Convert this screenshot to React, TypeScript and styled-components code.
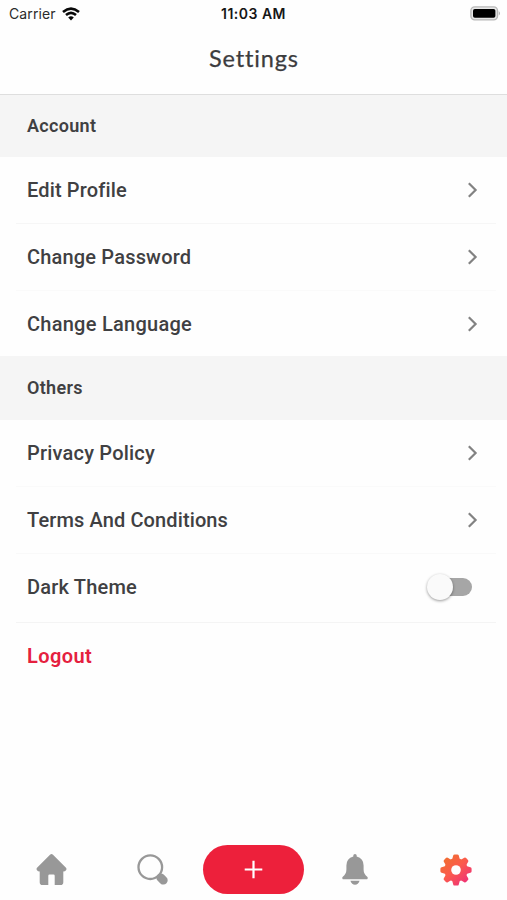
import React from "react";
import styled, { createGlobalStyle } from "styled-components";

const GlobalStyle = createGlobalStyle`
  * { box-sizing: border-box; }
  body { margin: 0; background: #fefefe; }
`;

const Screen = styled.div`
  display: flex;
  flex-direction: column;
  width: 507px;
  height: 900px;
  overflow: hidden;
  background: #fefefe;
  color: #404042;
  font-family: Roboto, sans-serif;
`;

const StatusBar = styled.div`
  display: grid;
  grid-template-columns: 1fr auto 1fr;
  align-items: center;
  height: 27px;
  font-family: Inter, sans-serif;
  line-height: 20px;
`;

const Carrier = styled.div`
  display: flex;
  align-items: center;
  gap: 6px;
  padding-left: 9px;
  color: #2b2b2b;
  font-size: 14px;
  letter-spacing: 0.1px;
`;

const Clock = styled.div`
  color: #161616;
  font-size: 14px;
  font-weight: 600;
  letter-spacing: 0.48px;
`;

const Battery = styled.div`
  display: flex;
  justify-content: flex-end;
  padding-right: 6px;
`;

const Header = styled.header`
  display: flex;
  justify-content: center;
  height: 68px;
  padding-top: 15px;
  border-bottom: 1px solid #dedede;
`;

const Title = styled.h1`
  margin: 0;
  padding-left: 1px;
  font-family: Lato, sans-serif;
  font-size: 23.5px;
  font-weight: 400;
  line-height: 32px;
  letter-spacing: 0.85px;
  color: #3c3c3e;
  -webkit-text-stroke: 0.25px #3c3c3e;
`;

const SectionTitle = styled.h2<{ $height: number }>`
  display: flex;
  align-items: center;
  height: ${(p) => p.$height}px;
  margin: 0;
  padding: 0 27px 2px;
  background: #f5f5f5;
  font-size: 18px;
  font-weight: 600;
  letter-spacing: 0.3px;
`;

const Row = styled.div<{ $height: number; $line?: string; $lift?: number }>`
  display: flex;
  align-items: center;
  justify-content: space-between;
  height: ${(p) => p.$height}px;
  margin: 0 11px 0 16px;
  padding: 0 18px ${(p) => p.$lift ?? 0}px 11px;
  border-bottom: ${(p) => (p.$line ? `1px solid ${p.$line}` : "0")};
`;

const Label = styled.span<{ $track: number; $danger?: boolean }>`
  font-size: 20px;
  font-weight: ${(p) => (p.$danger ? 600 : 500)};
  line-height: 28px;
  letter-spacing: ${(p) => p.$track}px;
  color: ${(p) => (p.$danger ? "#e5203e" : "inherit")};
  white-space: nowrap;
`;

const Switch = styled.button`
  display: flex;
  align-items: center;
  width: 41px;
  height: 18px;
  margin-right: 6px;
  padding: 0;
  border: 0;
  border-radius: 9px;
  background: #a6a6a6;
`;

const Knob = styled.span`
  flex: none;
  width: 26px;
  height: 26px;
  margin-left: -4px;
  border-radius: 50%;
  background: #fafafa;
  box-shadow: 0 1px 3px rgba(0, 0, 0, 0.4);
`;

const TabBar = styled.nav`
  display: grid;
  grid-template-columns: repeat(5, 1fr);
  align-items: center;
  justify-items: center;
  height: 61px;
  margin-top: auto;
`;

const Tab = styled.button<{ $nudge?: number }>`
  display: flex;
  padding: 0 0 0 ${(p) => p.$nudge ?? 0}px;
  border: 0;
  background: none;
`;

const AddButton = styled(Tab)`
  align-items: center;
  justify-content: center;
  width: 101px;
  height: 49px;
  border-radius: 25px;
  background: #ed203b;
`;

const Chevron = () => (
  <svg width="10" height="16" viewBox="0 0 10 16" fill="none" stroke="#828282" strokeWidth="2.2">
    <path d="M.8 1.2 7.6 8 .8 14.8" />
  </svg>
);

const WifiIcon = () => (
  <svg width="18" height="14" viewBox="0 0 18 14" fill="none" stroke="#080808" strokeWidth="2.6">
    <path d="M1 4.9Q9-1.8 17 4.9" />
    <path d="M4 8.1Q9 3.8 14 8.1" />
    <path d="M6.2 10.4Q9 8 11.8 10.4L9 13.6Z" fill="#080808" stroke="none" />
  </svg>
);

const BatteryIcon = () => (
  <svg width="31" height="15" viewBox="0 0 31 15">
    <rect x="0.9" y="0.9" width="26.6" height="13" rx="3.8" fill="#e8e8e8" stroke="#b8b8b8" strokeWidth="1.4" />
    <rect x="3" y="3" width="22.4" height="8.8" rx="1.8" fill="#000" />
    <path d="M28.8 5q2.2 2.3 0 4.6Z" fill="#aaa" />
  </svg>
);

const HomeIcon = () => (
  <svg width="31" height="31" viewBox="0 0 31 31" fill="#989898">
    <path d="M14 .8Q15.5-.6 17 .8L30 13.7Q31 15 30 16.2 29.2 17.5 27.3 17.5V28.2Q27.3 31 24.5 31H18.7V21.8Q18.7 20.5 17.5 20.5H13.5Q12.3 20.5 12.3 21.8V31H6.5Q3.7 31 3.7 28.2V17.5Q1.8 17.5 1 16.2 0 15 1 13.7Z" />
  </svg>
);

const SearchIcon = () => (
  <svg width="31" height="31" viewBox="0 0 31 31" fill="none" stroke="#989898">
    <circle cx="13.3" cy="13.2" r="11.8" strokeWidth="2.3" />
    <path d="m20.8 20.8 3 3" strokeWidth="4.5" />
    <path d="m23.7 23.7 2.7 2.6" strokeWidth="8.6" strokeLinecap="round" />
  </svg>
);

const PlusIcon = () => (
  <svg width="19" height="19" viewBox="0 0 19 19" stroke="#fff" strokeWidth="2.2">
    <path d="M0.7 9.5H18.3M9.5.7V18.3" />
  </svg>
);

const BellIcon = () => (
  <svg width="26" height="31" viewBox="0 0 26 31" fill="#989898">
    <path d="M11.3 2.4V1.6Q11.3 0 13 0T14.7 1.6V2.4Q21.6 4.1 21.6 11.5V15.5Q21.6 20.1 25.2 22.8 26.3 24 25.2 25.2H.8Q-.3 24 .8 22.8 4.4 20.1 4.4 15.5V11.5Q4.4 4.1 11.3 2.4Z" />
    <path d="M8.4 26.8H17.6Q16.2 30.8 13 30.8T8.4 26.8Z" />
  </svg>
);

const GearIcon = () => (
  <svg width="32" height="32" viewBox="-16 -16 32 32">
    <defs>
      <linearGradient id="gear" gradientUnits="userSpaceOnUse" x1="-9" y1="-11" x2="10" y2="11">
        <stop stopColor="#f26b35" />
        <stop offset="0.45" stopColor="#fb5b4c" />
        <stop offset="1" stopColor="#f03672" />
      </linearGradient>
      <mask id="gear-shape" maskUnits="userSpaceOnUse" x="-16" y="-16" width="32" height="32">
        <circle r="11.7" fill="#fff" />
        {[0, 45, 90, 135, 180, 225, 270, 315].map((angle) => (
          <path
            key={angle}
            d="M-3.9-10.3-2.8-14.4Q-2.5-15.6-1.3-15.6H1.3Q2.5-15.6 2.8-14.4L3.9-10.3Z"
            fill="#fff"
            transform={`rotate(${angle})`}
          />
        ))}
        <circle r="4.8" fill="#000" />
      </mask>
    </defs>
    <rect x="-16" y="-16" width="32" height="32" fill="url(#gear)" mask="url(#gear-shape)" />
  </svg>
);

export default function App() {
  return (
    <Screen>
      <GlobalStyle />
      <StatusBar>
        <Carrier>
          <span>Carrier</span>
          <WifiIcon />
        </Carrier>
        <Clock>11:03 AM</Clock>
        <Battery>
          <BatteryIcon />
        </Battery>
      </StatusBar>
      <Header>
        <Title>Settings</Title>
      </Header>
      <main>
        <SectionTitle $height={62}>Account</SectionTitle>
        <Row $height={67} $line="#f6f6f6">
          <Label $track={0.15}>Edit Profile</Label>
          <Chevron />
        </Row>
        <Row $height={67} $line="#fafafa">
          <Label $track={0.18}>Change Password</Label>
          <Chevron />
        </Row>
        <Row $height={65}>
          <Label $track={0.26}>Change Language</Label>
          <Chevron />
        </Row>
        <SectionTitle $height={64}>Others</SectionTitle>
        <Row $height={67} $line="#fafafa">
          <Label $track={0.2}>Privacy Policy</Label>
          <Chevron />
        </Row>
        <Row $height={67} $line="#f9f9f9">
          <Label $track={0.12}>Terms And Conditions</Label>
          <Chevron />
        </Row>
        <Row $height={69} $line="#f4f4f4" $lift={2}>
          <Label $track={0.2}>Dark Theme</Label>
          <Switch role="switch" aria-checked={false} aria-label="Dark Theme">
            <Knob />
          </Switch>
        </Row>
        <Row $height={66} $lift={1}>
          <Label $track={0.4} $danger>Logout</Label>
        </Row>
      </main>
      <TabBar>
        <Tab aria-label="Home" $nudge={2}><HomeIcon /></Tab>
        <Tab aria-label="Search"><SearchIcon /></Tab>
        <AddButton aria-label="Add"><PlusIcon /></AddButton>
        <Tab aria-label="Notifications"><BellIcon /></Tab>
        <Tab aria-label="Settings"><GearIcon /></Tab>
      </TabBar>
    </Screen>
  );
}
